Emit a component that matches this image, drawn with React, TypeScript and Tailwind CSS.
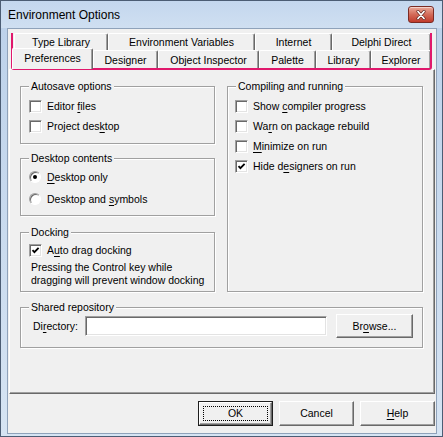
import type { ReactNode } from "react";

// Classic Win32 dialog look: MS Sans Serif is approximated with Liberation Sans 10.5px
const ui = "font-['Liberation_Sans',Arial,sans-serif] text-[10.5px] leading-[13px] text-black";

function U({ children }: { children: ReactNode }) {
  return <span className="underline decoration-1 underline-offset-[2px]">{children}</span>;
}

function CheckBox({ checked = false }: { checked?: boolean }) {
  return (
    <span className="relative box-border block h-[13px] w-[13px] shrink-0 border border-b-white border-l-[#a0a0a0] border-r-white border-t-[#a0a0a0] bg-white shadow-[inset_1px_1px_0_#696969,inset_-1px_-1px_0_#e3e3e3]">
      {checked && (
        <svg viewBox="0 0 11 11" className="absolute left-0 top-0 h-[11px] w-[11px]">
          <path d="M2.5 5.2 L4.4 7.2 L8.6 2.8" fill="none" stroke="#000" strokeWidth="1.8" />
        </svg>
      )}
    </span>
  );
}

function Radio({ checked = false }: { checked?: boolean }) {
  return (
    <span className="relative box-border flex h-[12px] w-[12px] shrink-0 items-center justify-center rounded-full border border-b-white border-l-[#a0a0a0] border-r-white border-t-[#a0a0a0] bg-white shadow-[inset_1px_1px_0_#696969]">
      {checked && <span className="block h-[4px] w-[4px] rounded-full bg-black" />}
    </span>
  );
}

function Group({
  label,
  className,
  children,
}: {
  label: string;
  className: string;
  children?: ReactNode;
}) {
  return (
    <div
      className={`relative box-border border border-[#a0a0a0] shadow-[inset_1px_1px_0_#fff,1px_1px_0_#fff] ${className}`}
    >
      <span className="absolute -top-[7px] left-[8px] bg-[#f0f0f0] px-[2px]">{label}</span>
      {children}
    </div>
  );
}

function Button({
  children,
  className,
  isDefault = false,
}: {
  children: ReactNode;
  className: string;
  isDefault?: boolean;
}) {
  if (isDefault) {
    return (
      <div className={`relative box-border border border-[#1e1e1e] ${className}`}>
        <div className="box-border flex h-full w-full items-center justify-center border border-b-[#696969] border-l-white border-r-[#696969] border-t-white bg-[#f0f0f0] shadow-[inset_-1px_-1px_0_#a0a0a0]">
          {children}
        </div>
        <span className="absolute inset-[4px] border border-dotted border-black" />
      </div>
    );
  }
  return (
    <div
      className={`box-border flex items-center justify-center border border-b-[#696969] border-l-white border-r-[#696969] border-t-white bg-[#f0f0f0] shadow-[inset_-1px_-1px_0_#a0a0a0] ${className}`}
    >
      {children}
    </div>
  );
}

function Tab({ label, className }: { label: string; className: string }) {
  return (
    <div
      className={`box-border flex shrink-0 items-center justify-center rounded-t-[2px] border-l border-r border-t border-l-white border-r-[#696969] border-t-white bg-[#f0f0f0] shadow-[inset_-1px_0_0_#a0a0a0] ${className}`}
    >
      {label}
    </div>
  );
}

export default function App() {
  return (
    <div className="relative box-border h-[437px] w-[443px] overflow-hidden border border-[#4c5d74] bg-gradient-to-b from-[#bcd1ea] to-[#d6e4f3]">
      {/* Title bar */}
      <div className="flex h-[27px] items-center justify-between bg-gradient-to-b from-[#c4d7ee] to-[#cfdff1] pl-[7px] pr-[8px]">
        <span className="font-['Liberation_Sans',Arial,sans-serif] text-[12px] text-black">
          Environment Options
        </span>
        <div className="box-border flex h-[17px] w-[26px] items-center justify-center rounded-[3px] border border-[#7b2b24] bg-gradient-to-b from-[#e9a99a] via-[#d36a58] to-[#c0392b] shadow-[inset_0_1px_0_rgba(255,255,255,0.5)]">
          <svg viewBox="0 0 12 10" className="h-[10px] w-[12px]">
            <path d="M3 1.5 L9 8.5 M9 1.5 L3 8.5" stroke="#5a1f19" strokeWidth="3" strokeLinecap="round" />
            <path d="M3 1.5 L9 8.5 M9 1.5 L3 8.5" stroke="#fff" strokeWidth="1.8" strokeLinecap="round" />
          </svg>
        </div>
      </div>

      {/* Client area */}
      <div className={`ml-[6px] box-border h-[406px] w-[430px] border border-[#8fa2ba] bg-[#f0f0f0] ${ui}`}>
        {/* Tab strip */}
        <div className="flex flex-col pt-[4px]">
          <div className="flex h-[17px] pl-[6px]">
            <Tab label="Type Library" className="h-[17px] w-[94px]" />
            <Tab label="Environment Variables" className="h-[17px] w-[147px]" />
            <Tab label="Internet" className="h-[17px] w-[77px]" />
            <Tab label="Delphi Direct" className="h-[17px] w-[99px]" />
          </div>
          <div className="flex h-[19px] items-end pl-[4px]">
            <Tab label="Preferences" className="relative z-10 h-[21px] w-[81px] pb-[2px]" />
            <Tab label="Designer" className="h-[19px] w-[65px]" />
            <Tab label="Object Inspector" className="h-[19px] w-[101px]" />
            <Tab label="Palette" className="h-[19px] w-[57px]" />
            <Tab label="Library" className="h-[19px] w-[55px]" />
            <Tab label="Explorer" className="h-[19px] w-[60px]" />
          </div>
        </div>

        {/* Page */}
        <div className="ml-[1px] box-border h-[325px] w-[426px] border border-b-[#696969] border-l-white border-r-[#696969] border-t-white pl-[10px] pt-[16px] shadow-[inset_-1px_-1px_0_#a0a0a0]">
          <div className="grid grid-cols-[195px_196px] gap-x-[12px]">
            <div className="flex flex-col">
              <Group label="Autosave options" className="h-[58px] pl-[8px] pt-[9px]">
                <label className="flex h-[20px] items-center gap-[5px]">
                  <CheckBox />
                  <span>
                    Editor <U>f</U>iles
                  </span>
                </label>
                <label className="flex h-[20px] items-center gap-[5px]">
                  <CheckBox />
                  <span>
                    Project des<U>k</U>top
                  </span>
                </label>
              </Group>

              <Group label="Desktop contents" className="mt-[14px] h-[58px] pl-[8px] pt-[7px]">
                <label className="flex h-[22px] items-center gap-[6px]">
                  <Radio checked />
                  <span>
                    <U>D</U>esktop only
                  </span>
                </label>
                <label className="flex h-[22px] items-center gap-[6px]">
                  <Radio />
                  <span>
                    Desktop and <U>s</U>ymbols
                  </span>
                </label>
              </Group>

              <Group label="Docking" className="mt-[16px] h-[60px] pl-[8px] pt-[7px]">
                <label className="flex h-[20px] items-center gap-[5px]">
                  <CheckBox checked />
                  <span>
                    A<U>u</U>to drag docking
                  </span>
                </label>
                <p className="mt-[1px] pl-[2px]">
                  Pressing the Control key while
                  <br />
                  dragging will prevent window docking
                </p>
              </Group>
            </div>

            <Group label="Compiling and running" className="h-[206px] pl-[7px] pt-[9px]">
              <label className="flex h-[20px] items-center gap-[5px]">
                <CheckBox />
                <span>
                  Show <U>c</U>ompiler progress
                </span>
              </label>
              <label className="flex h-[20px] items-center gap-[5px]">
                <CheckBox />
                <span>
                  Wa<U>r</U>n on package rebuild
                </span>
              </label>
              <label className="flex h-[20px] items-center gap-[5px]">
                <CheckBox />
                <span>
                  <U>M</U>inimize on run
                </span>
              </label>
              <label className="flex h-[20px] items-center gap-[5px]">
                <CheckBox checked />
                <span>
                  Hide d<U>e</U>signers on run
                </span>
              </label>
            </Group>
          </div>

          <Group label="Shared repository" className="mt-[15px] h-[41px] w-[403px] pl-[12px] pt-[6px]">
            <div className="flex h-[24px] items-center">
              <span className="w-[52px]">
                Di<U>r</U>ectory:
              </span>
              <div className="box-border h-[20px] w-[242px] border border-b-white border-l-[#a0a0a0] border-r-white border-t-[#a0a0a0] bg-white shadow-[inset_1px_1px_0_#696969,inset_-1px_-1px_0_#e3e3e3]" />
              <Button className="ml-[9px] h-[24px] w-[77px]">
                <span>
                  Br<U>o</U>wse...
                </span>
              </Button>
            </div>
          </Group>
        </div>

        {/* Dialog buttons */}
        <div className="mt-[7px] flex justify-end gap-[6px] pr-[1px]">
          <Button isDefault className="h-[25px] w-[75px]">
            OK
          </Button>
          <Button className="h-[25px] w-[75px]">Cancel</Button>
          <Button className="h-[25px] w-[75px]">
            <span>
              <U>H</U>elp
            </span>
          </Button>
        </div>
      </div>

      {/* Pink annotation bracket around the tab rows */}
      <div className="pointer-events-none absolute left-[10px] top-[32px] h-[37px] w-[421px] rounded-b-[3px] border-b-2 border-l-2 border-r-2 border-[#e0186c]" />
    </div>
  );
}
